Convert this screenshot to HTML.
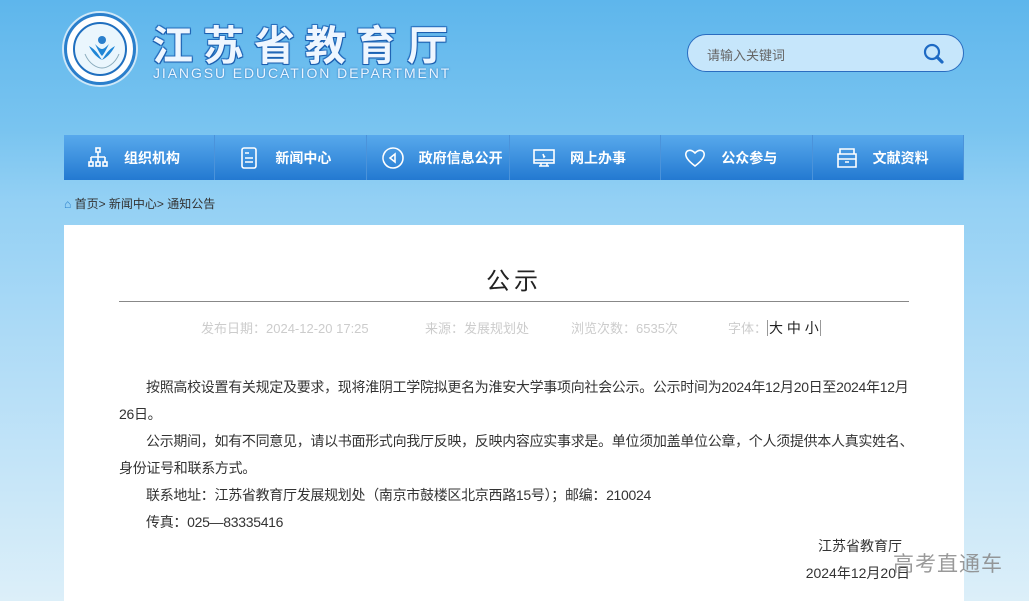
<!DOCTYPE html>
<html style="background:#dceff9"><head><meta charset="utf-8"><style>
*{margin:0;padding:0;box-sizing:border-box}
html,body{width:1029px;height:601px;overflow:hidden}
body{position:relative;font-family:"Liberation Sans","Noto Sans CJK SC",sans-serif;
background:linear-gradient(180deg,#5eb6ec 0px,#79c4f0 130px,#93d0f4 200px,#b5def7 380px,#dceff9 601px);}
.logo{position:absolute;left:64px;top:13px;width:72px;height:72px;border-radius:50%;background:#fff;border:3px solid #2a7fcc;box-shadow:0 0 0 2px #cfe8f8}
.logo .in{position:absolute;left:6px;top:6px;width:54px;height:54px;border-radius:50%;border:2px solid #1f6fbf;background:#eaf6fd}
.title{position:absolute;left:152px;top:12px;font-size:41px;font-weight:bold;letter-spacing:10px;color:#eef6ff;
text-shadow:0 0 2px #1c5fb0,1px 1px 0 #1c5fb0,-1px -1px 0 #2d78c6,1px -1px 0 #2d78c6,-1px 1px 0 #1c5fb0;font-family:"Noto Sans CJK SC",sans-serif}
.en{position:absolute;left:153px;top:65px;font-size:14px;color:#e8f4ff;letter-spacing:1.9px;text-shadow:0 0 2px #2a6fb8}
.search{position:absolute;left:687px;top:34px;width:277px;height:38px;border:1.5px solid #2a6cc0;border-radius:19px;background:#c6e6fb}
.search span{position:absolute;left:19px;top:10px;font-size:13px;color:#666}
.nav{position:absolute;left:64px;top:135px;width:900px;height:45px;background:linear-gradient(180deg,#58a9ec,#2379d1);display:flex}
.nav div{flex:1;border-right:1px solid #4b93da;color:#fff;font-weight:bold;font-size:14px;display:flex;align-items:center;padding-left:22px;gap:14px;white-space:nowrap}
.nav svg{width:24px;height:24px;fill:none;stroke:#fff;stroke-width:1.6;flex:none}
.crumb{position:absolute;left:64px;top:195px;font-size:12px;color:#333}
.panel{position:absolute;left:64px;top:225px;width:900px;height:376px;background:#fff}
.h{position:absolute;left:0;width:900px;top:36px;text-align:center;font-size:24px;color:#222;letter-spacing:4px}
.line{position:absolute;left:55px;width:790px;top:76px;border-top:1px solid #888}
.meta{position:absolute;top:93px;font-size:13px;color:#ccc;white-space:pre}
.meta b{font-weight:normal;color:#222;border-left:1px solid #999;border-right:1px solid #999;padding:0 1px;font-size:14px}
.body{position:absolute;left:55px;top:149px;width:820px;font-size:14px;line-height:27px;color:#333;white-space:nowrap;letter-spacing:-0.3px}
.body p{text-indent:27px}
.sig{position:absolute;right:62px;font-size:14px;color:#333}
.wm{position:absolute;left:893px;top:548px;font-size:21px;color:#888;letter-spacing:1px;opacity:.85}
</style></head><body>
<div class="logo"><div class="in"><svg width="54" height="54" viewBox="0 0 54 54"><circle cx="27" cy="16" r="4" fill="#2a7fcc"/><path d="M14 22c4 8 9 12 13 14-4-6-6-10-13-14zM40 22c-4 8-9 12-13 14 4-6 6-10 13-14zM20 20c3 6 5 10 7 12 2-2 4-6 7-12-3 3-5 5-7 5s-4-2-7-5z" fill="#1f86d6"/><path d="M10 30c4 10 12 14 17 14s13-4 17-14" stroke="#8ab" fill="none"/></svg></div></div>
<div class="title">江苏省教育厅</div>
<div class="en">JIANGSU EDUCATION DEPARTMENT</div>
<div class="search"><span>请输入关键词</span><svg style="position:absolute;left:234px;top:7px" width="24" height="24" viewBox="0 0 24 24"><circle cx="10" cy="10" r="7" fill="none" stroke="#1d6ac4" stroke-width="2.2"/><path d="M15 15l5 5" stroke="#1d6ac4" stroke-width="3.2" stroke-linecap="round"/></svg></div>
<div class="nav">
<div><svg viewBox="0 0 24 24"><rect x="10" y="2" width="4" height="4"/><path d="M12 6v5M5 11h14M5 11v5M12 11v5M19 11v5"/><rect x="3" y="16" width="4" height="4"/><rect x="10" y="16" width="4" height="4"/><rect x="17" y="16" width="4" height="4"/></svg>组织机构</div>
<div><svg viewBox="0 0 24 24"><rect x="5" y="2" width="14" height="20" rx="2"/><path d="M8 7h4M8 12h8M8 16h8"/></svg>新闻中心</div>
<div style="padding-left:14px"><svg viewBox="0 0 24 24"><path d="M12 2a10 10 0 1 1 0 20a10 10 0 0 1-8-4M4 18a10 10 0 0 1 8-16"/><path d="M14 8l-5 4 5 4z"/></svg>政府信息公开</div>
<div><svg viewBox="0 0 24 24"><rect x="2" y="4" width="20" height="13"/><path d="M2 14h20M9 17v3M15 17v3M7 20h10"/><path d="M11 8l1 3 1-1" /></svg>网上办事</div>
<div><svg viewBox="0 0 24 24"><path d="M12 20C4 14 2 10 3 7c1-3 5-4 9 0 4-4 8-3 9 0 1 3-1 7-9 13z"/></svg>公众参与</div>
<div><svg viewBox="0 0 24 24"><path d="M5 3h14v5H5zM3 8h18v13H3zM3 13h18M10 16h4"/></svg>文献资料</div>
</div>
<div class="crumb"><span style="color:#2a7fcc">⌂</span> 首页&gt; 新闻中心&gt; 通知公告</div>
<div class="panel">
<div class="h">公示</div>
<div class="line"></div>
<div class="meta" style="left:137px">发布日期：2024-12-20 17:25</div>
<div class="meta" style="left:361px">来源：发展规划处</div>
<div class="meta" style="left:507px">浏览次数：6535次</div>
<div class="meta" style="left:664px">字体：<b>大 中 小</b></div>
<div class="body">
<p>按照高校设置有关规定及要求，现将淮阴工学院拟更名为淮安大学事项向社会公示。公示时间为2024年12月20日至2024年12月<br>26日。</p>
<p>公示期间，如有不同意见，请以书面形式向我厅反映，反映内容应实事求是。单位须加盖单位公章，个人须提供本人真实姓名、<br>身份证号和联系方式。</p>
<p>联系地址：江苏省教育厅发展规划处（南京市鼓楼区北京西路15号）；邮编：210024</p>
<p>传真：025—83335416</p>
</div>
<div class="sig" style="top:311px">江苏省教育厅</div>
<div class="sig" style="top:338px;right:54px">2024年12月20日</div>
</div>
<div class="wm">高考直通车</div>
</body></html>
